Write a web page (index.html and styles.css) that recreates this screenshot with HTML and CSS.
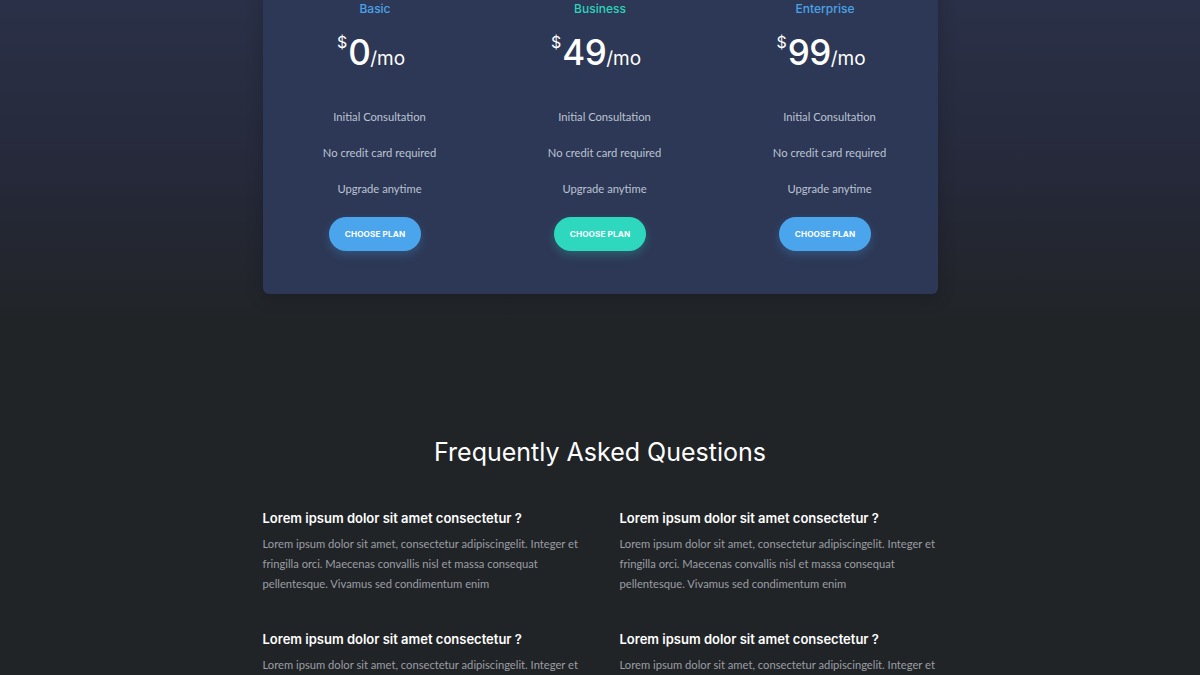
FILE: index.html
```html
<!DOCTYPE html>
<html lang="en">
<head>
<meta charset="utf-8">
<title>Pricing</title>
<link rel="stylesheet" href="styles.css">
</head>
<body>
<main class="page">
  <section class="pricing">
    <div class="plan">
      <h3 class="plan-name blue">Basic</h3>
      <div class="price"><span class="cur">$</span><span class="amt">0</span><span class="per">/mo</span></div>
      <ul class="features">
        <li>Initial Consultation</li>
        <li>No credit card required</li>
        <li>Upgrade anytime</li>
      </ul>
      <button class="btn btn-blue">CHOOSE PLAN</button>
    </div>
    <div class="plan">
      <h3 class="plan-name teal">Business</h3>
      <div class="price"><span class="cur">$</span><span class="amt">49</span><span class="per">/mo</span></div>
      <ul class="features">
        <li>Initial Consultation</li>
        <li>No credit card required</li>
        <li>Upgrade anytime</li>
      </ul>
      <button class="btn btn-teal">CHOOSE PLAN</button>
    </div>
    <div class="plan">
      <h3 class="plan-name blue">Enterprise</h3>
      <div class="price"><span class="cur">$</span><span class="amt">99</span><span class="per">/mo</span></div>
      <ul class="features">
        <li>Initial Consultation</li>
        <li>No credit card required</li>
        <li>Upgrade anytime</li>
      </ul>
      <button class="btn btn-blue">CHOOSE PLAN</button>
    </div>
  </section>

  <section class="faq">
    <h2 class="faq-title">Frequently Asked Questions</h2>
    <div class="faq-grid">
      <div class="faq-item">
        <h4>Lorem ipsum dolor sit amet consectetur ?</h4>
        <p>Lorem ipsum dolor sit amet, consectetur adipiscingelit. Integer et fringilla orci. Maecenas convallis nisl et massa consequat pellentesque. Vivamus sed condimentum enim</p>
      </div>
      <div class="faq-item">
        <h4>Lorem ipsum dolor sit amet consectetur ?</h4>
        <p>Lorem ipsum dolor sit amet, consectetur adipiscingelit. Integer et fringilla orci. Maecenas convallis nisl et massa consequat pellentesque. Vivamus sed condimentum enim</p>
      </div>
      <div class="faq-item">
        <h4>Lorem ipsum dolor sit amet consectetur ?</h4>
        <p>Lorem ipsum dolor sit amet, consectetur adipiscingelit. Integer et fringilla orci. Maecenas convallis nisl et massa consequat pellentesque. Vivamus sed condimentum enim</p>
      </div>
      <div class="faq-item">
        <h4>Lorem ipsum dolor sit amet consectetur ?</h4>
        <p>Lorem ipsum dolor sit amet, consectetur adipiscingelit. Integer et fringilla orci. Maecenas convallis nisl et massa consequat pellentesque. Vivamus sed condimentum enim</p>
      </div>
    </div>
  </section>
</main>
</body>
</html>
```

FILE: styles.css
```css
* { box-sizing: border-box; }
html, body { margin: 0; padding: 0; }
body {
  background: linear-gradient(180deg, #2a3047 0px, #25293a 170px, #212427 320px, #212427 100%);
  background-color: #212427;
  min-height: 100vh;
  font-family: Lato, "Open Sans", sans-serif;
  color: #fff;
  overflow: hidden;
}
.page { width: 675px; margin: 0 auto; }

.pricing {
  margin-top: -30px;
  padding: 30px 0 43px;
  background: #2d3856;
  border-radius: 6px;
  display: grid;
  grid-template-columns: repeat(3, 1fr);
  box-shadow: 0 4px 18px rgba(0,0,0,0.18);
}
.plan { display: flex; flex-direction: column; align-items: center; }
.plan-name {
  margin: 1px 0 0;
  font-family: Inter, sans-serif;
  font-weight: 500;
  font-size: 12px;
  line-height: 16px;
}
.blue { color: #4ba3e6; }
.teal { color: #2cd4ba; }

.price {
  margin-top: 15px;
  margin-right: 8px;
  display: flex;
  align-items: baseline;
  font-family: Inter, sans-serif;
  line-height: 40px;
  height: 40px;
}
.cur { font-size: 16px; align-self: flex-start; line-height: 20px; margin-top: 0; margin-right: 1px; }
.amt { font-size: 35px; font-weight: 500; letter-spacing: -0.5px; }
.per { font-size: 19px; }

.features {
  list-style: none;
  margin: 27px 0 0;
  padding: 0 0 0 9px;
  text-align: center;
  color: #bcc3d3;
  font-size: 11.2px;
}
.features li { line-height: 36px; height: 36px; }

.btn {
  margin-top: 10px;
  width: 92px;
  height: 34px;
  border: 0;
  border-radius: 17px;
  color: #fff;
  font-family: Inter, sans-serif;
  font-weight: 700;
  font-size: 8.2px;
  letter-spacing: 0.1px;
  cursor: pointer;
}
.btn-blue { background: #4ba5ec; box-shadow: 0 4px 10px rgba(75,165,236,0.25); }
.btn-teal { background: #2dd8bf; box-shadow: 0 4px 10px rgba(45,216,191,0.25); }

.faq { margin-top: 140px; }
.faq-title {
  margin: 0;
  text-align: center;
  font-family: Inter, sans-serif;
  font-weight: 400;
  font-size: 25px;
  line-height: 36px;
  color: #fff;
}
.faq-grid {
  margin-top: 38px;
  display: grid;
  grid-template-columns: 1fr 1fr;
  column-gap: 39px;
  row-gap: 35px;
}
.faq-item h4 {
  margin: 0;
  font-family: Inter, sans-serif;
  font-weight: 600;
  font-size: 13px;
  line-height: 20px;
  color: #fff;
}
.faq-item p {
  margin: 6px 0 0;
  font-size: 11.2px;
  line-height: 20px;
  color: #9b9ea4;
}
```
